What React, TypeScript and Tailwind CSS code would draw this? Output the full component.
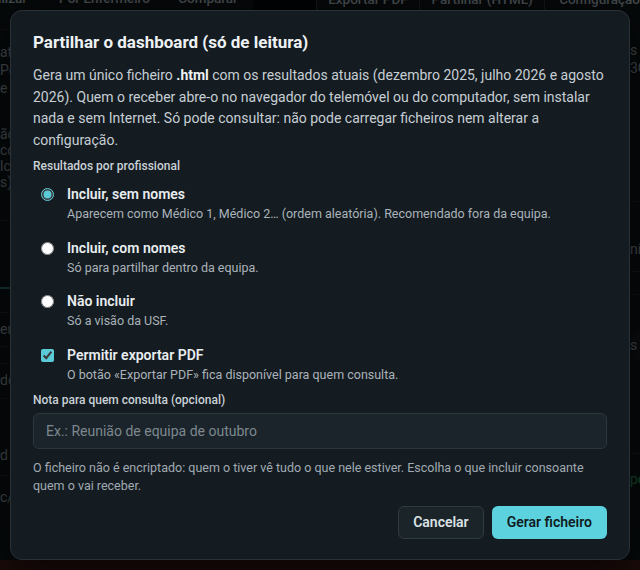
import React from "react";

function Option({
  type,
  checked,
  label,
  desc,
}: {
  type: "radio" | "checkbox";
  checked: boolean;
  label: string;
  desc: string;
}) {
  return (
    <label className="flex items-start">
      <span className="ml-[8px] mt-[4px] flex h-[13px] w-[13px] shrink-0">
        <input
          type={type}
          name={type === "radio" ? "prof" : undefined}
          defaultChecked={checked}
          className="m-0 h-[13px] w-[13px] accent-[#5ccbd8] [color-scheme:light]"
        />
      </span>
      <span className="ml-[13px] flex flex-col">
        <span className="text-[14px] font-semibold leading-[20px] text-[#e8edf0]">{label}</span>
        <span className="mt-[1px] text-[12.5px] leading-[18px] text-[#aab3ba]">{desc}</span>
      </span>
    </label>
  );
}

export default function App() {
  return (
    <div className="relative h-[570px] w-[640px] overflow-hidden bg-[#0e1418] font-['Roboto',sans-serif]">
      {/* background dashboard (dimmed behind the dialog) */}
      <div className="flex h-full flex-col">
        <div className="-mt-[14px] flex h-[24px] shrink-0 items-center whitespace-nowrap text-[13.5px] font-medium text-[#9aa6ae]">
          <div className="flex w-[44px] justify-end overflow-hidden pr-[16px]">Atualizar</div>
          <div className="w-[139px] pl-[16px]">Por Enfermeiro</div>
          <div className="w-[77px]">Comparar</div>
          <div className="h-full w-[65px] bg-[#05080a]" />
          <div className="h-full w-[107px] border-l border-[#2a343b] pt-[3px] text-center">Exportar PDF</div>
          <div className="h-full w-[129px] border-l border-[#2a343b] pt-[3px] text-center">Partilhar (HTML)</div>
          <div className="h-full flex-1 border-l border-[#2a343b] pl-[14px] pt-[3px]">Configuração</div>
        </div>
        <div className="flex flex-1 text-[14px] text-[#8f9aa2]">
          <div className="flex w-[40px] flex-col whitespace-nowrap">
            <div className="h-[19px]" />
            <div className="h-[14px] border-t border-[#1d252b]" />
            <div className="leading-[18px]">atual</div>
            <div className="leading-[18px]">Pe</div>
            <div className="leading-[18px]">e u</div>
            <div className="h-[29px]" />
            <div className="leading-[16px]">ãc</div>
            <div className="leading-[16px]">co</div>
            <div className="leading-[16px]">lc</div>
            <div className="leading-[16px]">s)</div>
            <div className="h-[30px]" />
            <div className="h-[67px] border-t border-[#222b31]" />
            <div className="h-[2px] bg-[#2f7479]" />
            <div className="h-[23px]" />
            <div className="h-[35px] border-y border-[#222b31] pt-[7px] leading-[18px]">em</div>
            <div className="h-[17px] border-b border-[#222b31]" />
            <div className="h-[35px] border-b border-[#222b31] pt-[7px] leading-[18px]">de</div>
            <div className="h-[77px] border-b border-[#222b31] pt-[47px] leading-[18px]">d</div>
            <div className="pt-[12px] leading-[18px]">c/</div>
          </div>
          <div className="flex-1" />
          <div className="flex w-[40px] flex-col whitespace-nowrap pl-[30px]">
            <div className="h-[31px]" />
            <div className="leading-[18px]">s</div>
            <div className="leading-[18px]">3G</div>
            <div className="h-[124px]" />
            <div className="h-[70px] border-t border-[#222b31] pt-[38px] leading-[18px]">nír</div>
            <div className="h-[23px] border-t border-[#222b31]" />
            <div className="h-[35px] border-t border-[#222b31]" />
            <div className="h-[32px] rounded-l-full bg-[#141b20] pt-[7px] leading-[18px]">s</div>
            <div className="h-[92px]" />
            <div className="h-[34px] border-t border-[#222b31] pt-[16px] leading-[18px] text-[#2f9a5a]">pe</div>
          </div>
        </div>
        <div className="h-[10px] shrink-0 bg-[#3a1a14]" />
      </div>
      <div className="absolute inset-0 bg-black/55" />

      {/* dialog */}
      <div
        role="dialog"
        className="absolute left-[10px] top-[10px] w-[620px] rounded-[12px] border border-[#273137] bg-[#151c21] px-[22px] pb-[20px] pt-[19px] shadow-[0_10px_40px_rgba(0,0,0,0.6)]"
      >
        <h2 className="text-[17px] font-bold leading-[24px] text-[#eef2f4]">
          Partilhar o dashboard (só de leitura)
        </h2>
        <p className="mt-[11px] text-[14px] leading-[21.5px] text-[#c6ced4]">
          Gera um único ficheiro <b className="font-bold text-[#eef2f4]">.html</b> com os resultados atuais
          (dezembro 2025, julho 2026 e agosto 2026). Quem o receber abre-o no navegador do telemóvel ou do
          computador, sem instalar nada e sem Internet. Só pode consultar: não pode carregar ficheiros nem
          alterar a configuração.
        </p>
        <div className="mt-[7px] text-[12px] font-medium leading-[16px] text-[#c9d1d7]">
          Resultados por profissional
        </div>
        <div className="mt-[10px] flex flex-col gap-[14.5px]">
          <Option
            type="radio"
            checked
            label="Incluir, sem nomes"
            desc="Aparecem como Médico 1, Médico 2… (ordem aleatória). Recomendado fora da equipa."
          />
          <Option type="radio" checked={false} label="Incluir, com nomes" desc="Só para partilhar dentro da equipa." />
          <Option type="radio" checked={false} label="Não incluir" desc="Só a visão da USF." />
          <Option
            type="checkbox"
            checked
            label="Permitir exportar PDF"
            desc="O botão «Exportar PDF» fica disponível para quem consulta."
          />
        </div>
        <div className="mt-[8px] text-[12px] font-medium leading-[16px] text-[#c9d1d7]">
          Nota para quem consulta (opcional)
        </div>
        <input
          type="text"
          placeholder="Ex.: Reunião de equipa de outubro"
          className="mt-[5px] h-[36px] w-full rounded-[6px] border border-[#2c373e] bg-[#1b242a] px-[12px] text-[14px] text-[#dfe5e9] outline-none placeholder:text-[#7d8890]"
        />
        <p className="mt-[10px] text-[12.5px] leading-[18px] text-[#a0aab2]">
          O ficheiro não é encriptado: quem o tiver vê tudo o que nele estiver. Escolha o que incluir consoante
          quem o vai receber.
        </p>
        <div className="mt-[11px] flex justify-end gap-[8px]">
          <button className="h-[33px] rounded-[6px] border border-[#2f3a41] bg-[#1b2429] px-[14px] text-[14px] font-semibold text-[#dbe2e6]">
            Cancelar
          </button>
          <button className="h-[33px] rounded-[6px] bg-[#5dd2df] px-[15px] text-[14px] font-semibold text-[#0f1c22]">
            Gerar ficheiro
          </button>
        </div>
      </div>
    </div>
  );
}
